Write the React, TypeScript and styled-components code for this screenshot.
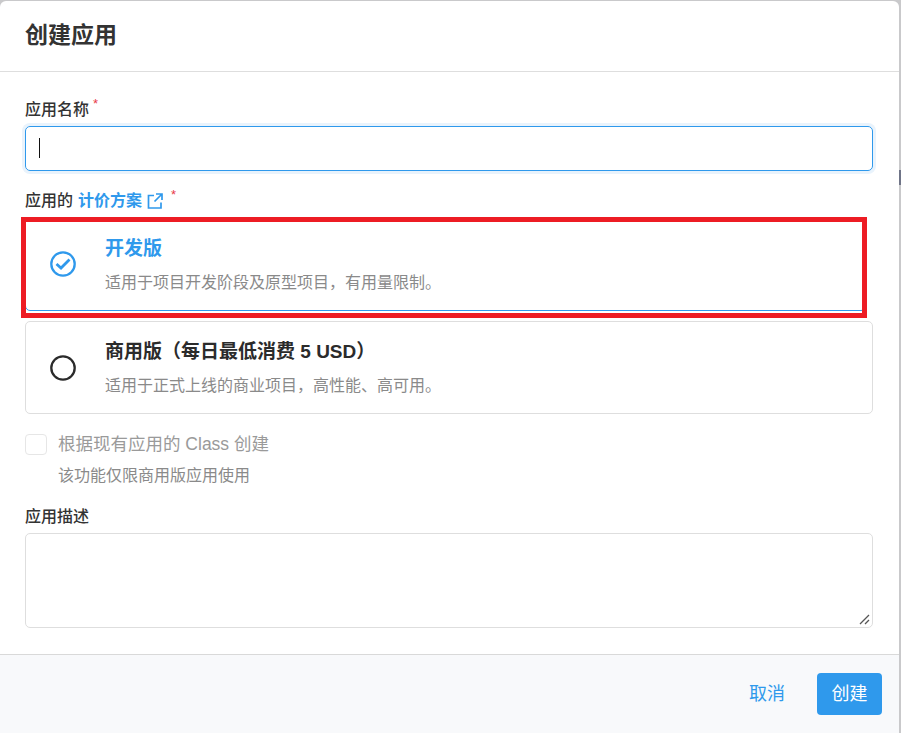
import styled, { createGlobalStyle } from 'styled-components';

const GlobalStyle = createGlobalStyle`
  html, body {
    margin: 0;
    padding: 0;
    background: #c9c9cb;
  }
  * {
    box-sizing: border-box;
  }
`;

const Modal = styled.div`
  position: relative;
  width: 899px;
  height: 732px;
  margin-top: 1px;
  background: #fff;
  border-radius: 6px 6px 0 0;
  font-family: "Helvetica Neue", "Liberation Sans", "Noto Sans CJK SC", sans-serif;
  color: #2b2b2b;
  display: flex;
  flex-direction: column;
`;

const Header = styled.div`
  height: 71px;
  flex: none;
  padding: 0 25px 7px;
  display: flex;
  align-items: center;
  border-bottom: 1px solid #dedede;
  font-size: 23px;
  font-weight: 700;
  color: #333;
`;

const Body = styled.div`
  flex: none;
  height: 582px;
  padding: 26px 26px 0 25px;
`;

const Label = styled.div<{ $top?: number }>`
  height: 24px;
  margin-top: ${(p) => p.$top ?? 0}px;
  font-size: 16px;
  line-height: 22px;
  font-weight: 500;
  color: #333;
  display: flex;
  align-items: center;
`;

const Required = styled.sup<{ $gap?: number }>`
  color: #e8394a;
  font-size: 13px;
  line-height: 1;
  margin-left: ${(p) => p.$gap ?? 4}px;
  position: relative;
  top: -7px;
  vertical-align: baseline;
`;

const PriceLink = styled.span`
  color: #2f99ec;
  font-weight: 700;
  margin-left: 5px;
  display: inline-flex;
  align-items: center;
  gap: 5px;
`;

const NameInput = styled.div`
  height: 45px;
  margin-top: 4px;
  border: 1px solid #2f99ec;
  border-radius: 5px;
  box-shadow: 0 0 0 3px #e9f3fc;
  padding: 11px 13px;
  margin-bottom: 18px;
`;

const Caret = styled.div`
  width: 1px;
  height: 20px;
  background: #111;
`;

const PlanCard = styled.div<{ $active?: boolean }>`
  height: ${(p) => (p.$active ? '94px' : '93px')};
  margin-top: ${(p) => (p.$active ? '4px' : '10px')};
  margin-right: ${(p) => (p.$active ? '7px' : '0')};
  border: 1px solid ${(p) => (p.$active ? '#2f99ec' : '#dedede')};
  border-radius: 5px;
  display: flex;
  align-items: center;
`;

const Radio = styled.div`
  width: 79px;
  flex: none;
  display: flex;
  justify-content: center;
  padding-right: 6px;
`;

const PlanText = styled.div`
  display: flex;
  flex-direction: column;
  gap: 12px;
  padding-top: 1px;
`;

const PlanTitle = styled.div<{ $active?: boolean }>`
  font-size: 19px;
  line-height: 24px;
  font-weight: 700;
  color: ${(p) => (p.$active ? '#2f99ec' : '#2b2b2b')};
`;

const PlanDesc = styled.div`
  font-size: 16px;
  line-height: 20px;
  color: #8a8a8a;
`;

const CheckRow = styled.div`
  margin-top: 20px;
  height: 22px;
  display: flex;
  align-items: flex-start;
  gap: 11px;
  font-size: 17.5px;
  line-height: 20px;
  color: #9a9a9a;
`;

const CheckBox = styled.div`
  width: 22px;
  height: 21px;
  border: 1px solid #e6e6e6;
  border-radius: 4px;
`;

const CheckHelp = styled.div`
  margin: 9px 0 0 33px;
  font-size: 16px;
  line-height: 22px;
  color: #8a8a8a;
`;

const DescArea = styled.div`
  position: relative;
  height: 95px;
  margin-top: 4px;
  border: 1px solid #dedede;
  border-radius: 5px;
`;

const Resizer = styled.svg`
  position: absolute;
  right: 2px;
  bottom: 2px;
`;

const Footer = styled.div`
  flex: 1;
  background: #f8f9fb;
  border-top: 1px solid #d9d9d9;
  display: flex;
  justify-content: flex-end;
  align-items: flex-start;
  padding: 18px 17px 0 0;
  gap: 32px;
`;

const CancelButton = styled.div`
  height: 42px;
  line-height: 42px;
  font-size: 18px;
  color: #2f99ec;
`;

const SubmitButton = styled.div`
  width: 65px;
  height: 42px;
  line-height: 42px;
  text-align: center;
  font-size: 18px;
  color: #fff;
  background: #2f99ec;
  border-radius: 4px;
`;

const Annotation = styled.div`
  position: absolute;
  left: 21px;
  top: 216px;
  width: 846px;
  height: 101px;
  border: 5px solid #ed1c24;
  pointer-events: none;
`;

const PageBehind = styled.div`
  position: fixed;
  left: 899px;
  top: 170px;
  width: 2px;
  height: 15px;
  background: #6f7487;
`;

export default function App() {
  return (
    <>
      <GlobalStyle />
      <PageBehind />
      <Modal>
        <Header>创建应用</Header>
        <Body>
          <Label>
            应用名称<Required>*</Required>
          </Label>
          <NameInput>
            <Caret />
          </NameInput>
          <Label>
            应用的
            <PriceLink>
              计价方案
              <svg width="16" height="16" viewBox="0 0 16 16" fill="none" stroke="#2f99ec" strokeWidth="1.7">
                <path d="M7 2.5H1.5v12.5H14V9.5" />
                <path d="M9 1h6v6M15 1L7.5 8.5" />
              </svg>
            </PriceLink>
            <Required $gap={8}>*</Required>
          </Label>
          <PlanCard $active>
            <Radio>
              <svg width="26" height="26" viewBox="0 0 26 26" fill="none" stroke="#2f99ec" strokeWidth="2.3">
                <circle cx="13" cy="13" r="11.7" />
                <path d="M6.5 13l4.5 4 8.5-8.5" strokeWidth="2.8" />
              </svg>
            </Radio>
            <PlanText>
              <PlanTitle $active>开发版</PlanTitle>
              <PlanDesc>适用于项目开发阶段及原型项目，有用量限制。</PlanDesc>
            </PlanText>
          </PlanCard>
          <PlanCard>
            <Radio>
              <svg width="26" height="26" viewBox="0 0 26 26" fill="none" stroke="#2b2b2b" strokeWidth="2.3">
                <circle cx="13" cy="13" r="11.7" />
              </svg>
            </Radio>
            <PlanText>
              <PlanTitle>商用版（每日最低消费 5 USD）</PlanTitle>
              <PlanDesc>适用于正式上线的商业项目，高性能、高可用。</PlanDesc>
            </PlanText>
          </PlanCard>
          <CheckRow>
            <CheckBox />
            根据现有应用的 Class 创建
          </CheckRow>
          <CheckHelp>该功能仅限商用版应用使用</CheckHelp>
          <Label $top={18}>应用描述</Label>
          <DescArea>
            <Resizer width="11" height="11" viewBox="0 0 11 11" stroke="#555" strokeWidth="1.3">
              <path d="M1 10L10 1M6 10l4-4" />
            </Resizer>
          </DescArea>
        </Body>
        <Footer>
          <CancelButton>取消</CancelButton>
          <SubmitButton>创建</SubmitButton>
        </Footer>
        <Annotation />
      </Modal>
    </>
  );
}
